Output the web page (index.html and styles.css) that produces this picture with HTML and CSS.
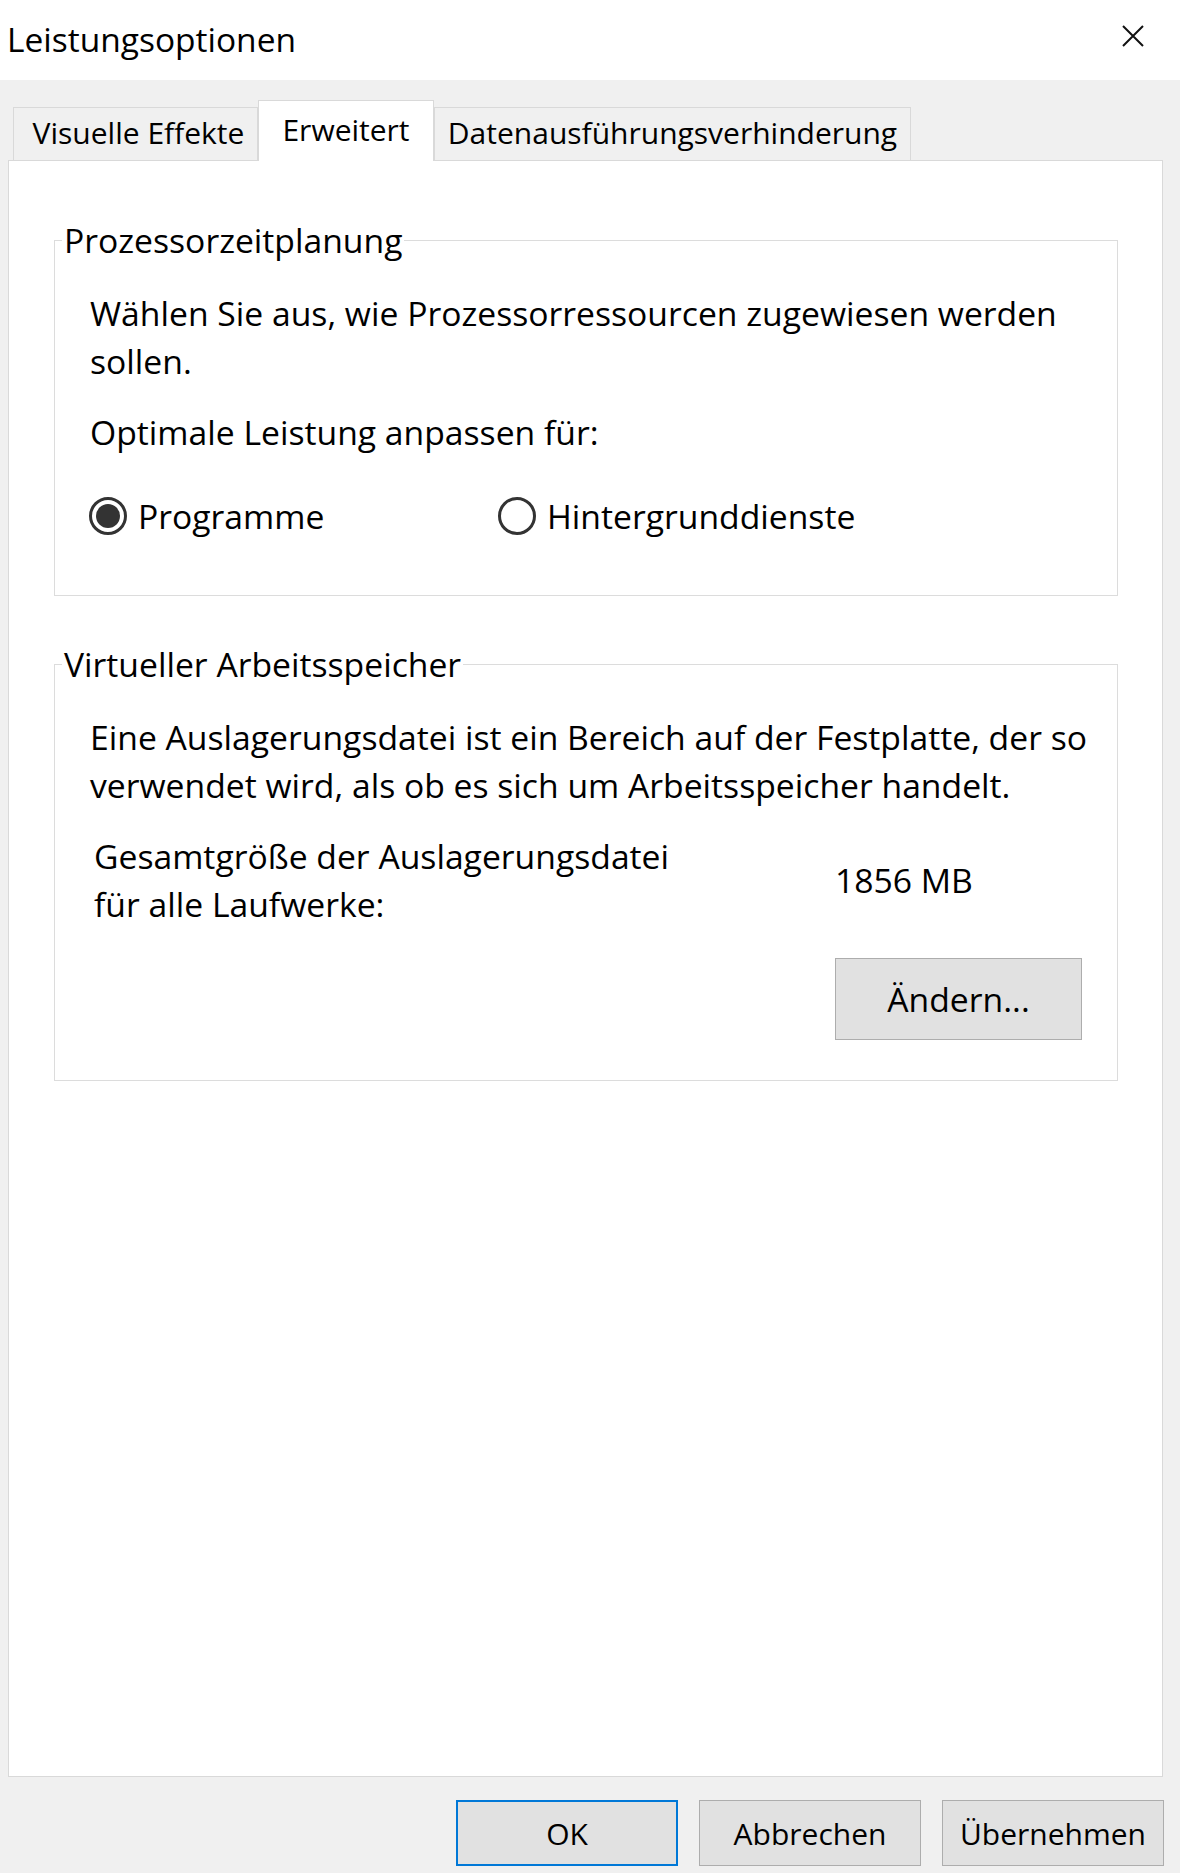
FILE: index.html
```html
<!DOCTYPE html>
<html lang="de">
<head>
    <title>Leistungsoptionen</title>
    <link rel="stylesheet" href="styles.css">
</head>
<body>
    <div class="titlebar">
        <span class="title">Leistungsoptionen</span>
        <button class="close-btn" title="Schließen">
            <svg width="22" height="22" viewBox="0 0 22 22">
                <path d="M1 1 L21 21 M21 1 L1 21" stroke="#111" stroke-width="2" fill="none"/>
            </svg>
        </button>
    </div>

    <div class="dialog">
        <div class="tabs">
            <div class="tab tab-visual">Visuelle Effekte</div>
            <div class="tab tab-advanced selected">Erweitert</div>
            <div class="tab tab-dep">Datenausführungsverhinderung</div>
        </div>

        <div class="panel">
            <fieldset class="group">
                <legend>Prozessorzeitplanung</legend>
                <p class="text">Wählen Sie aus, wie Prozessorressourcen zugewiesen werden<br>sollen.</p>
                <p class="text">Optimale Leistung anpassen für:</p>
                <div class="radio-row">
                    <label class="radio radio-programs">
                        <span class="radio-circle checked"></span>
                        Programme
                    </label>
                    <label class="radio">
                        <span class="radio-circle"></span>
                        Hintergrunddienste
                    </label>
                </div>
            </fieldset>

            <fieldset class="group group-memory">
                <legend>Virtueller Arbeitsspeicher</legend>
                <p class="text">Eine Auslagerungsdatei ist ein Bereich auf der Festplatte, der so<br>verwendet wird, als ob es sich um Arbeitsspeicher handelt.</p>
                <div class="size-row">
                    <span class="size-label">Gesamtgröße der Auslagerungsdatei<br>für alle Laufwerke:</span>
                    <span class="size-value">1856 MB</span>
                </div>
                <div class="change-row">
                    <button class="btn change-btn">Ändern...</button>
                </div>
            </fieldset>
        </div>

        <div class="actions">
            <button class="btn ok-btn">OK</button>
            <button class="btn">Abbrechen</button>
            <button class="btn">Übernehmen</button>
        </div>
    </div>
</body>
</html>
```

FILE: styles.css
```css
body {
    font-family: "Open Sans", "Noto Sans", sans-serif;
    font-size: 33.7px;
    color: #000;
    background-color: #f0f0f0;
    margin: 0;
    width: 1180px;
    height: 1873px;
}

.titlebar {
    height: 80px;
    background-color: #fff;
    display: flex;
    align-items: center;
    justify-content: space-between;
    padding: 0 36px 0 7px;
}

.title {
    font-size: 33.5px;
    line-height: 48px;
    margin-top: -2px;
}

.close-btn {
    background: none;
    border: none;
    padding: 0;
    width: 22px;
    height: 22px;
    margin-top: -8px;
}

.close-btn svg {
    display: block;
}

.dialog {
    padding: 0 17px 0 8px;
}

.tabs {
    height: 80px;
    display: flex;
    align-items: flex-end;
    padding-left: 5px;
}

.tab {
    box-sizing: border-box;
    height: 53px;
    line-height: 50px;
    font-size: 30px;
    text-align: center;
    border: 1px solid #d9d9d9;
    border-bottom: none;
    background-color: #f0f0f0;
}

.tab-visual {
    width: 245px;
    padding-left: 6px;
}

.tab-advanced {
    width: 176px;
}

.tab-dep {
    width: 477px;
}

.tab.selected {
    position: relative;
    height: 61px;
    line-height: 58px;
    margin-bottom: -1px;
    background-color: #fff;
}

.panel {
    box-sizing: border-box;
    height: 1617px;
    background-color: #fff;
    border: 1px solid #d9d9d9;
    padding-top: 55px;
}

.group {
    margin: 0 44px 0 45px;
    padding: 25px 10px 55px 35px;
    border: 1px solid #dcdcdc;
}

.group legend {
    line-height: 48px;
    padding: 0 2px;
    margin-left: -28px;
}

.group-memory {
    margin-top: 44px;
    padding-bottom: 40px;
}

.text {
    margin: 0 0 23px 0;
    line-height: 48px;
}

.radio-row {
    display: flex;
    margin-top: 36px;
    line-height: 48px;
}

.radio {
    display: flex;
    align-items: center;
    gap: 11px;
}

.radio-programs {
    width: 409px;
    margin-left: -1px;
}

.radio-circle {
    box-sizing: border-box;
    width: 38px;
    height: 38px;
    border: 3px solid #333;
    border-radius: 50%;
    display: flex;
    align-items: center;
    justify-content: center;
}

.radio-circle.checked::after {
    content: "";
    width: 24px;
    height: 24px;
    border-radius: 50%;
    background-color: #333;
}

.size-row {
    display: flex;
    align-items: center;
    line-height: 48px;
    padding-left: 4px;
}

.size-label {
    width: 741px;
}

.change-row {
    display: flex;
    margin-top: 30px;
    padding-left: 745px;
}

.btn {
    box-sizing: border-box;
    font-family: "Open Sans", "Noto Sans", sans-serif;
    font-size: 30px;
    color: #000;
    background-color: #e1e1e1;
    border: 1px solid #adadad;
    width: 222px;
    height: 66px;
    padding: 0;
}

.change-btn {
    font-size: 33.7px;
    width: 247px;
    height: 82px;
}

.actions {
    display: flex;
    justify-content: flex-end;
    gap: 21px;
    margin-top: 23px;
    margin-right: -1px;
}

.ok-btn {
    border: 2px solid #0078d7;
}
```
